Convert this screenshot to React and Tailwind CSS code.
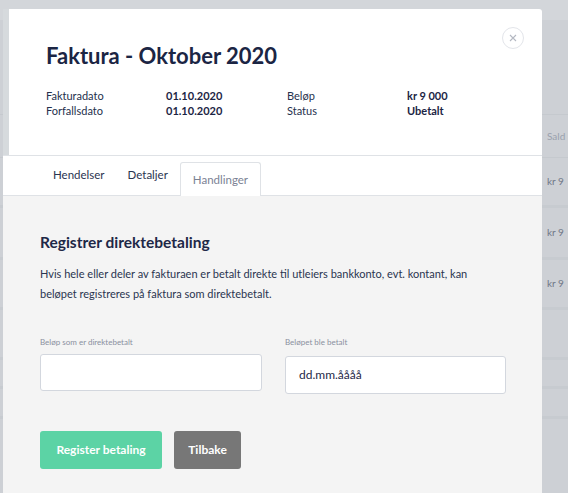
import React from "react";

const font = { fontFamily: "Lato, 'Noto Sans', sans-serif" };

const InfoRow = ({ label, value, label2, value2 }) => (
  <div className="grid grid-cols-[120px_121px_120px_1fr] text-[11px] leading-[15px] text-[#25304d]">
    <div>{label}</div>
    <div className="font-bold text-[#1b2544]">{value}</div>
    <div>{label2}</div>
    <div className="font-bold text-[#1b2544]">{value2}</div>
  </div>
);

const BgRow = ({ h, text, line = true }) => (
  <div
    className={`flex justify-end items-center ${h} ${line ? "border-b-[3px] border-[#c7cbd0]" : ""}`}
  >
    <div className="w-[21px] text-[10px] text-[#6f7787]">{text}</div>
  </div>
);

export default function App() {
  return (
    <div className="relative h-[493px] w-[568px] overflow-hidden bg-[#cdd0d5]" style={font}>
      {/* page behind the modal */}
      <div className="flex flex-col">
        <div className="h-[20px] bg-[#d3d6da]" />
        <div className="h-[95px] border-b border-[#c5c9ce]" />
        <div className="h-[43px] border-b border-[#c5c9ce] flex justify-end items-center">
          <div className="w-[21px] text-[10px] text-[#9aa1ad]">Sald</div>
        </div>
        <BgRow h="h-[50px]" text="kr 9" />
        <BgRow h="h-[52px]" text="kr 9" />
        <BgRow h="h-[50px]" text="kr 9" />
        <BgRow h="h-[50px]" text="" />
        <BgRow h="h-[29px]" text="" />
        <BgRow h="h-[30px]" text="" />
      </div>

      {/* modal */}
      <div className="absolute left-[3px] top-[9px] w-[539px] h-[500px] rounded-tr-[3px] bg-white flex flex-col">
        <div className="relative h-[146px] pl-[37px] pt-[33px] border-l-[6px] border-[#d6dadd]">
          <h1 className="text-[22px] leading-[28px] font-bold text-[#1b2544]">
            Faktura - Oktober 2020
          </h1>
          <div className="mt-[18px]">
            <InfoRow label="Fakturadato" value="01.10.2020" label2="Beløp" value2="kr 9 000" />
            <InfoRow label="Forfallsdato" value="01.10.2020" label2="Status" value2="Ubetalt" />
          </div>
          <button className="absolute right-[18px] top-[18px] w-[22px] h-[22px] rounded-full border border-[#e3e5ea] flex items-center justify-center">
            <svg width="8" height="8" viewBox="0 0 8 8" stroke="#b4b8c2" strokeWidth="1.1">
              <path d="M1 1L7 7M7 1L1 7" />
            </svg>
          </button>
        </div>

        <div className="h-[41px] border-y border-[#dfe2e6] flex items-end pl-[37px] text-[11.5px]">
          <div className="h-[40px] flex items-center px-[13px] text-[#2a3450]">Hendelser</div>
          <div className="h-[40px] flex items-center px-[10px] text-[#2a3450]">Detaljer</div>
          <div className="h-[34px] ml-[2px] flex items-center px-[12px] border border-b-0 border-[#dfe2e6] rounded-t-[3px] text-[#7b8294] bg-white -mb-px">
            Handlinger
          </div>
        </div>

        <div className="flex-1 bg-[#f4f4f4] pl-[37px] pr-[36px] pt-[36px]">
          <h2 className="text-[15.5px] leading-[20px] font-bold text-[#1e2847]">
            Registrer direktebetaling
          </h2>
          <p className="mt-[12px] text-[11px] leading-[20px] text-[#2a3450] pr-[20px]">
            Hvis hele eller deler av fakturaen er betalt direkte til utleiers bankkonto, evt. kontant, kan
            beløpet registreres på faktura som direktebetalt.
          </p>

          <div className="mt-[33px] flex gap-[23px]">
            <div className="w-[222px]">
              <div className="text-[8px] leading-[10px] text-[#8a90a0]">Beløp som er direktebetalt</div>
              <div className="mt-[7px] h-[37px] bg-white border border-[#d3d7de] rounded-[3px]" />
            </div>
            <div className="w-[221px]">
              <div className="text-[8px] leading-[10px] text-[#8a90a0]">Beløpet ble betalt</div>
              <div className="mt-[9px] h-[38px] bg-white border border-[#d3d7de] rounded-[3px] flex items-center pl-[13px] text-[12px] text-[#1e2847]">
                dd.mm.åååå
              </div>
            </div>
          </div>

          <div className="mt-[37px] flex gap-[12px]">
            <button className="h-[38px] w-[122px] rounded-[3px] bg-[#5cd3a5] text-white text-[12px] font-bold">
              Register betaling
            </button>
            <button className="h-[38px] w-[67px] rounded-[3px] bg-[#777777] text-white text-[12px] font-bold">
              Tilbake
            </button>
          </div>
        </div>
      </div>
    </div>
  );
}
